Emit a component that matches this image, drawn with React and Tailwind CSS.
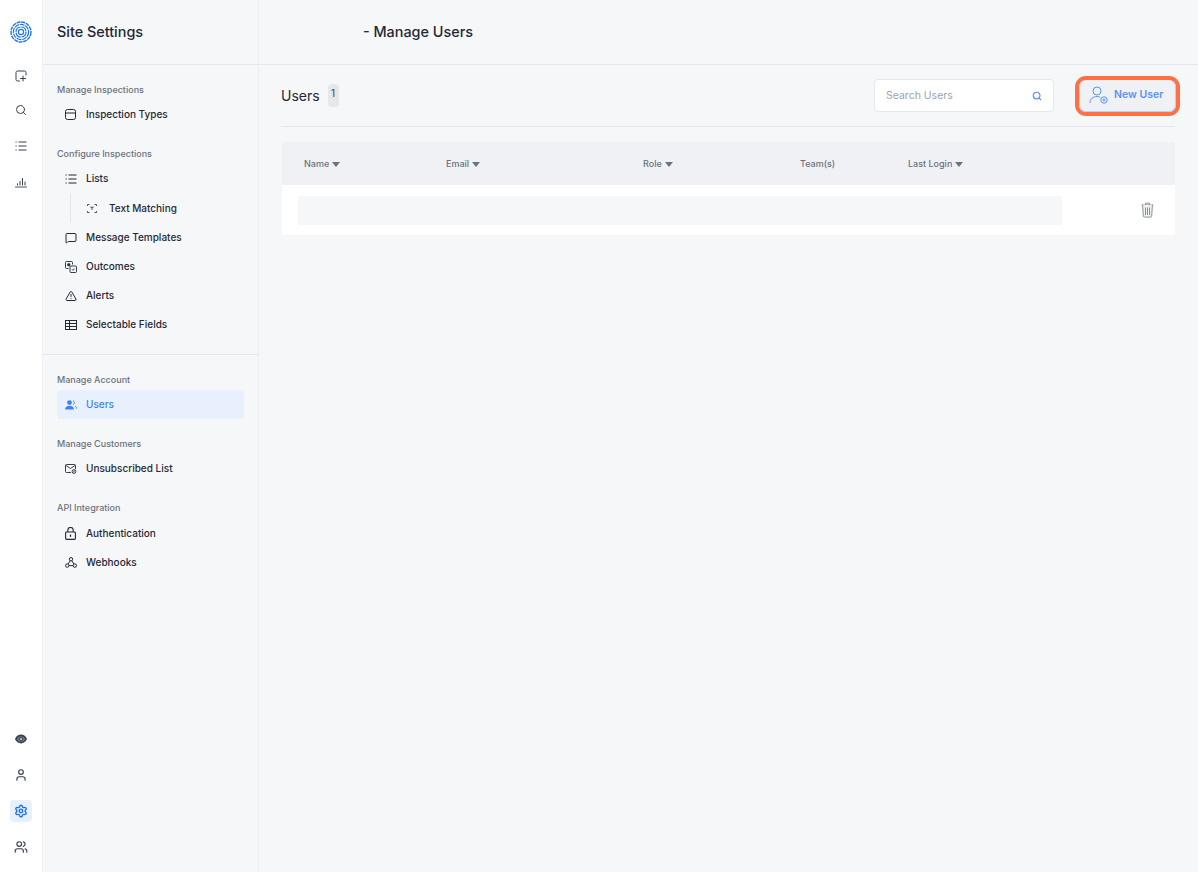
import React from "react";
import { Search, User, Settings, Users, MessageSquare, TriangleAlert } from "lucide-react";

const FONT = { fontFamily: "Inter, sans-serif" };

function Logo() {
  return (
    <svg width="22" height="22" viewBox="0 0 22 22" fill="none" stroke="#1f74f5">
      <circle cx="11" cy="11" r="10" strokeWidth="1.4" strokeDasharray="4 0.7" />
      <circle cx="11" cy="11" r="7.6" strokeWidth="1.2" strokeDasharray="5 0.7" />
      <circle cx="11" cy="11" r="5" strokeWidth="1.2" strokeDasharray="7 0.7" />
      <circle cx="11" cy="11" r="2.6" strokeWidth="1.2" />
    </svg>
  );
}

function NewInspectionIcon() {
  return (
    <svg width="12" height="12" viewBox="0 0 12 12" fill="none" stroke="#374151" strokeWidth="1" strokeLinecap="round">
      <path d="M4.5 11H2.5A1.5 1.5 0 0 1 1 9.5V2.5A1.5 1.5 0 0 1 2.5 1h7A1.5 1.5 0 0 1 11 2.5V5" />
      <path d="M8 6v5M5.5 8.5h5" />
    </svg>
  );
}

function ChartIcon() {
  return (
    <svg width="12" height="12" viewBox="0 0 12 12" fill="none" stroke="#374151" strokeLinecap="round">
      <path d="M0.5 11h11" strokeWidth="0.9" />
      <path d="M2.5 9V7.8M5 9V5.5M7.5 9V2.5M10 9V6" strokeWidth="1" />
    </svg>
  );
}

function DottedList({ color = "#374151" }) {
  return (
    <svg width="12" height="12" viewBox="0 0 12 12" fill="none" stroke={color} strokeWidth="1">
      <path d="M3.5 2h8M3.5 6h8M3.5 10h8" />
      <path d="M0.5 2h1.2M0.5 6h1.2M0.5 10h1.2" />
    </svg>
  );
}

function EyeIcon() {
  return (
    <svg width="12" height="12" viewBox="0 0 12 12" fill="none" stroke="#374151">
      <path d="M0.8 6C2 3.6 3.8 2.4 6 2.4S10 3.6 11.2 6C10 8.4 8.2 9.6 6 9.6S2 8.4 0.8 6z" strokeWidth="1.6" fill="#6b7280" />
      <circle cx="6" cy="6" r="1.5" fill="#e5e7eb" strokeWidth="1" />
    </svg>
  );
}

function TypesIcon() {
  return (
    <svg width="11" height="11" viewBox="0 0 11 11" fill="none" stroke="#1f2937" strokeWidth="1">
      <rect x="0.5" y="0.5" width="10" height="10" rx="2" />
      <path d="M0.5 4h10" />
    </svg>
  );
}

function TextMatchIcon() {
  return (
    <svg width="10" height="9" viewBox="0 0 10 9" fill="none" stroke="#374151" strokeWidth="0.9">
      <path d="M0.5 2V0.5H2.5M7.5 0.5H9.5V2M9.5 7V8.5H7.5M2.5 8.5H0.5V7" />
      <path d="M3.3 3.2h3.4M5 3.2v2.8" />
    </svg>
  );
}

function OutcomesIcon() {
  return (
    <svg width="12" height="12" viewBox="0 0 12 12" fill="none" stroke="#1f2937" strokeWidth="0.9">
      <path d="M3.5 7.5h-2a1 1 0 0 1-1-1v-5a1 1 0 0 1 1-1h5a1 1 0 0 1 1 1v2" />
      <rect x="5" y="5" width="6.5" height="6.5" rx="1" />
      <path d="M2.8 2.8h2v2h-2z" fill="#1f2937" />
      <path d="M7 8.3l1 1 1.6-1.8" />
    </svg>
  );
}

function FieldsIcon() {
  return (
    <svg width="12" height="10" viewBox="0 0 12 10" fill="none" stroke="#1f2937" strokeWidth="1">
      <rect x="0.5" y="0.5" width="11" height="9" />
      <path d="M0.5 3.5h11M0.5 6.5h11M4.5 0.5v9" />
    </svg>
  );
}

function UnsubscribedIcon() {
  return (
    <svg width="12" height="10" viewBox="0 0 12 10" fill="none" stroke="#1f2937" strokeWidth="0.9">
      <path d="M6 8.5H1.5a1 1 0 0 1-1-1v-6a1 1 0 0 1 1-1h8a1 1 0 0 1 1 1V5" />
      <path d="M1 1.5l4.5 3 4.5-3" />
      <circle cx="9" cy="7.5" r="1.9" />
      <path d="M7.7 8.8l2.6-2.6" />
    </svg>
  );
}

function LockIcon() {
  return (
    <svg width="11" height="13" viewBox="0 0 11 13" fill="none" stroke="#1f2937" strokeWidth="1.1">
      <rect x="0.6" y="5" width="9.8" height="7.4" rx="0.8" />
      <path d="M2.8 5V3.2a2.7 2.7 0 0 1 5.4 0V5" />
      <path d="M5.5 7.6v2.2" strokeWidth="1.3" />
    </svg>
  );
}

function WebhooksIcon() {
  return (
    <svg width="12" height="11" viewBox="0 0 12 11" fill="none" stroke="#1f2937" strokeWidth="1">
      <circle cx="6" cy="2.2" r="1.7" />
      <circle cx="2.2" cy="8.6" r="1.7" />
      <circle cx="9.8" cy="8.6" r="1.7" />
      <path d="M5.2 3.7L3.1 7.1M6.8 3.7l2.1 3.4M3.9 8.6h4.2" />
    </svg>
  );
}

function UsersActiveIcon() {
  return (
    <svg width="12" height="10" viewBox="0 0 12 10" fill="#3b82f6">
      <circle cx="4.5" cy="2.6" r="2.4" />
      <path d="M0 9.6c0-2.6 2-3.9 4.5-3.9S9 7 9 9.6z" />
      <path d="M8 .6a2.3 2.3 0 0 1 0 4.2M10 6c1.2.6 1.8 1.8 1.8 3" fill="none" stroke="#3b82f6" strokeWidth="0.9" />
    </svg>
  );
}

function TrashIcon() {
  return (
    <svg width="13" height="16" viewBox="0 0 13 16" fill="#eef0f2" stroke="#8b919b" strokeWidth="1">
      <path d="M0.5 3h12M4.5 3V1.2h4V3" />
      <path d="M1.6 3l.7 11.2a1 1 0 0 0 1 .9h6.4a1 1 0 0 0 1-.9L11.4 3" />
      <path d="M4.5 5.5v7.5M6.5 5.5v7.5M8.5 5.5v7.5" />
    </svg>
  );
}

function Caret() {
  return <span className="ml-[3px] inline-block w-0 h-0 border-x-[4.5px] border-x-transparent border-t-[5px] border-t-[#6b7280]" />;
}

function NavLabel({ children }) {
  return <div className="h-5 flex items-center text-[9px] font-medium text-[#6b7280]">{children}</div>;
}

function NavItem({ icon, label, active }) {
  return (
    <div className={`h-[29px] flex items-center rounded pl-[8px] ${active ? "bg-[#e9f0fd] text-[#3b82f6]" : "text-[#1f2937]"}`}>
      <span className="w-[21px] flex justify-start">{icon}</span>
      <span className="text-[10px] font-medium">{label}</span>
    </div>
  );
}

const iconCls = "w-3 h-3 text-[#1f2937]";

export default function App() {
  return (
    <div className="flex h-[872px] bg-[#f6f7f9] overflow-hidden" style={FONT}>
      {/* icon rail */}
      <div className="w-[43px] shrink-0 bg-white flex flex-col items-center border-r border-[#f0f1f4]">
        <div className="mt-[21px] mb-[27px]"><Logo /></div>
        <div className="flex flex-col items-center gap-[24px]">
          <NewInspectionIcon />
          <Search className="w-3 h-3 text-[#374151] -mt-[2px]" />
          <DottedList />
          <ChartIcon />
        </div>
        <div className="mt-auto mb-[14px] flex flex-col items-center gap-[14px]">
          <div className="w-[22px] h-[22px] flex items-center justify-center"><EyeIcon /></div>
          <div className="w-[22px] h-[22px] flex items-center justify-center"><User className="w-3.5 h-3.5 text-[#374151]" /></div>
          <div className="w-[22px] h-[22px] rounded bg-[#e9f0fd] flex items-center justify-center"><Settings className="w-3.5 h-3.5 text-[#1f74f5]" strokeWidth={2.4} /></div>
          <div className="w-[22px] h-[22px] flex items-center justify-center"><Users className="w-3.5 h-3.5 text-[#374151]" /></div>
        </div>
      </div>

      {/* settings sidebar */}
      <div className="w-[216px] shrink-0 border-r border-[#eceef2] flex flex-col">
        <div className="h-[65px] shrink-0 border-b border-[#e3e6ec] flex items-center pl-[14px] pb-[1px] text-[14.4px] font-medium text-[#1f2937]">Site Settings</div>
        <div className="px-[14px] pt-[15px]">
          <NavLabel>Manage Inspections</NavLabel>
          <NavItem icon={<TypesIcon />} label="Inspection Types" />
          <div className="h-[15px]" />
          <NavLabel>Configure Inspections</NavLabel>
          <NavItem icon={<DottedList color="#1f2937" />} label="Lists" />
          <div className="ml-[13px] border-l border-[#e3e6ec] pl-[16px] h-[30px] pt-px flex items-center text-[#1f2937]">
            <TextMatchIcon />
            <span className="ml-[12px] text-[10px] font-medium">Text Matching</span>
          </div>
          <NavItem icon={<MessageSquare className={iconCls} />} label="Message Templates" />
          <NavItem icon={<OutcomesIcon />} label="Outcomes" />
          <NavItem icon={<TriangleAlert className={iconCls} />} label="Alerts" />
          <NavItem icon={<FieldsIcon />} label="Selectable Fields" />
        </div>
        <div className="mt-[15px] border-t border-[#e3e6ec]" />
        <div className="px-[14px] pt-[15px]">
          <NavLabel>Manage Account</NavLabel>
          <NavItem icon={<UsersActiveIcon />} label="Users" active />
          <div className="h-[15px]" />
          <NavLabel>Manage Customers</NavLabel>
          <NavItem icon={<UnsubscribedIcon />} label="Unsubscribed List" />
          <div className="h-[15px]" />
          <NavLabel>API Integration</NavLabel>
          <div className="pt-px">
            <NavItem icon={<LockIcon />} label="Authentication" />
          </div>
          <NavItem icon={<WebhooksIcon />} label="Webhooks" />
        </div>
      </div>

      {/* main */}
      <div className="flex-1 flex flex-col min-w-0">
        <div className="h-[65px] shrink-0 border-b border-[#e3e6ec] flex items-center pl-[104px] pb-[1px] text-[14.4px] font-medium text-[#1f2937]">- Manage Users</div>
        <div className="pl-[22px] pr-[23px]">
          <div className="h-[62px] border-b border-[#e3e6ec] flex items-center">
            <span className="text-[14px] text-[#1f2937]">Users</span>
            <span className="ml-[8px] w-[11px] h-[23px] rounded bg-[#e5e7eb] text-[10px] text-[#374151] flex justify-center pt-[2px]">1</span>
            <div className="ml-auto w-[180px] h-[33px] bg-white border border-[#e5e7eb] rounded flex items-center justify-between pl-[11px] pr-[11px]">
              <span className="text-[10.5px] text-[#9ca3af]">Search Users</span>
              <Search className="w-[10px] h-[10px] text-[#5b93f5]" strokeWidth={2.8} />
            </div>
            <div className="ml-[21px] -mr-[5px] w-[105px] h-[40px] rounded-[11px] border-4 border-[#ff7043] bg-[#f0f1f5]">
              <div className="h-full rounded-[7px] border border-[#b9cff8] border-t-0 flex items-center pl-[9px] text-[#5b93f5]">
                <svg width="20" height="20" viewBox="0 0 20 20" fill="none" stroke="#5b93f5" strokeWidth="1">
                  <circle cx="8" cy="6" r="4" />
                  <path d="M1 18c0-4 3-6.5 7-6.5 1.2 0 2.3.2 3.2.7" />
                  <circle cx="15" cy="15" r="3.2" />
                  <path d="M15 13.5v3M13.5 15h3" />
                </svg>
                <span className="ml-[5px] pb-[1px] text-[10.5px] font-semibold">New User</span>
              </div>
            </div>
          </div>
          <div className="mt-[15px] ml-px bg-white">
            <div className="h-[43px] bg-[#f0f1f5] grid grid-cols-[142px_197px_157px_108px_1fr] pl-[22px] pt-px items-center text-[9px] font-medium text-[#6b7280]">
              <div className="flex items-center">Name<Caret /></div>
              <div className="flex items-center">Email<Caret /></div>
              <div className="flex items-center">Role<Caret /></div>
              <div>Team(s)</div>
              <div className="flex items-center">Last Login<Caret /></div>
            </div>
            <div className="h-[50px] flex items-center pl-[16px] pr-[21px]">
              <div className="w-[764px] h-[29px] bg-[#f6f7f9]" />
              <div className="ml-auto"><TrashIcon /></div>
            </div>
          </div>
        </div>
      </div>
    </div>
  );
}
